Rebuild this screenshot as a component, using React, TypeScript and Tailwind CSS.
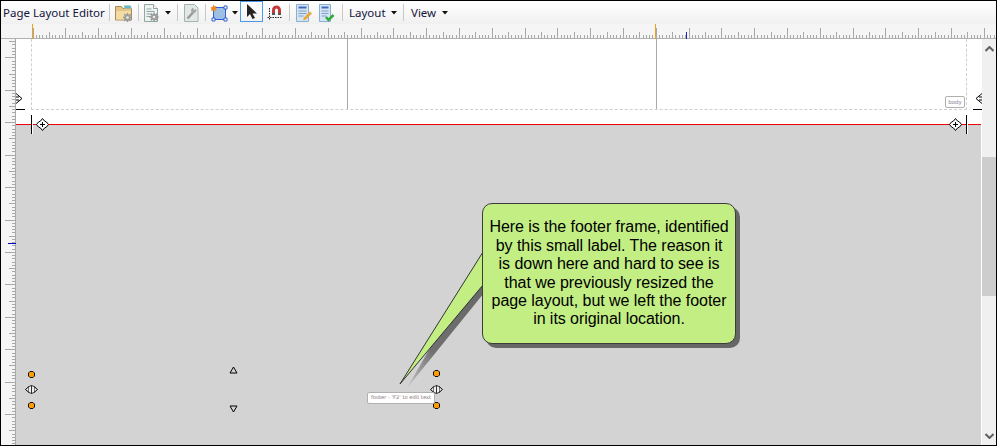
const Sep = ({ ml }: { ml: string }) => <div className={`w-px h-[17px] bg-[#c8c8c8] ${ml}`} />;

const Caret = ({ className = "" }: { className?: string }) => (
  <svg width="6" height="4" viewBox="0 0 6 4" className={className}>
    <path d="M0 0h6L3 3.500z" fill="#111" />
  </svg>
);

const Gear = ({ x, y }: { x: number; y: number }) => (
  <g transform={`translate(${x} ${y})`}>
    <path d="M0-4.500v9M-4.500 0h9M-3.200-3.200l6.400 6.400M3.200-3.200l-6.400 6.400" stroke="#8f8f8f" strokeWidth="1.500" />
    <circle r="3" fill="#9c9c9c" />
    <circle r="1.300" fill="#ececec" />
  </g>
);

const Ruler = () => {
  const ticks = [];
  for (let i = 0; i < 300; i++) {
    const x = 31.5 + i * 3.28;
    const h = i % 10 === 0 ? 11 : i % 5 === 0 ? 7 : 4;
    ticks.push(<path key={i} d={`M${Math.round(x) + 0.5} 15v-${h}`} stroke="#a8a8a8" />);
  }
  return (
    <svg width="995" height="15" className="block">
      {ticks}
      <path d="M0 14.500h995" stroke="#b0b0b0" />
      <path d="M31.500 0v15M654.500 0v15" stroke="#f0a020" />
      <path d="M685.500 8v7" stroke="#2020c0" />
    </svg>
  );
};

const SideRuler = () => {
  const ticks = [];
  for (let i = 0; i < 130; i++) {
    const y = -14.14 + i * 3.244;
    const h = i % 10 === 0 ? 11 : i % 5 === 0 ? 7 : 4;
    ticks.push(<path key={i} d={`M15 ${Math.round(y) + 0.5}h-${h}`} stroke="#a8a8a8" />);
  }
  return (
    <svg width="15" height="406" className="block">
      {ticks}
      <path d="M14.500 0v406" stroke="#a8a8a8" />
      <path d="M7 204.500h8" stroke="#0000c8" />
    </svg>
  );
};

const Dot = ({ className }: { className: string }) => (
  <svg width="7" height="7" viewBox="0 0 7 7" className={`absolute ${className}`}>
    <path d="M2 .5h3L6.500 2v3L5 6.500H2L.5 5V2z" fill="#ff9d00" stroke="#111" />
  </svg>
);

const SideHandle = ({ className }: { className: string }) => (
  <svg width="13" height="9" viewBox="0 0 13 9" className={`absolute ${className}`}>
    <path d="M.5 4.500L4 1.500v6zM12.500 4.500L9 1.500v6z" fill="#efefef" stroke="#000" />
    <path d="M4 .5h5v8H4z" fill="#efefef" />
    <path d="M6.500 .5v8M4 1.500l2.500-1 2.500 1M4 7.500l2.500 1 2.500-1" fill="none" stroke="#000" strokeWidth=".8" />
  </svg>
);

const Tri = ({ className, down }: { className: string; down?: boolean }) => (
  <svg width="9" height="8" viewBox="0 0 9 8" className={`absolute ${className}`}>
    <path d={down ? "M1 1h7L4.500 7z" : "M1 7h7L4.500 1z"} fill="none" stroke="#000" />
  </svg>
);

const Move = ({ className }: { className: string }) => (
  <svg width="13" height="13" viewBox="0 0 13 13" className={`absolute ${className}`}>
    <path d="M6.500 .5l2 2.500 2 1 2 2.500-2 2.500-2 1-2 2.500-2-2.500-2-1L.5 6.500l2-2.500 2-1z" fill="#fff" stroke="#000" />
    <path d="M6.500 4v5M4 6.500h5" stroke="#000" />
  </svg>
);

const Mark = ({ className }: { className: string }) => <div className={`absolute bg-black ${className}`} />;

export default function App() {
  return (
    <div className="w-[997px] h-[446px] flex flex-col border border-black bg-white overflow-hidden font-['Noto_Sans',sans-serif]">
      {/* Toolbar */}
      <div className="h-[23px] shrink-0 flex items-center bg-gradient-to-b from-[#ffffff] to-[#f0f0f0] text-[11.500px] text-[#14143c]">
        <span className="ml-[2px] w-[99px] whitespace-nowrap">Page Layout Editor</span>
        <Sep ml="ml-[7px]" />
        <svg width="18" height="18" viewBox="0 0 18 18" className="ml-[5px]">
          <path d="M.5 5V2.500h6l1.500 2h8.500v11.500H.5z" fill="#e4c585" stroke="#a88c55" />
          <path d="M9 1.500h6.500l1 3H9.500z" fill="#58b8d8" stroke="#d8c48e" strokeWidth=".5" />
          <path d="M1 7h15v8.500H1z" fill="#f2dca4" />
          <Gear x={12.500} y={13.500} />
        </svg>
        <Sep ml="ml-[5px]" />
        <svg width="17" height="18" viewBox="0 0 17 18" className="ml-[5px]">
          <path d="M.5.5h9l4 4v13H.5z" fill="#eef3f2" stroke="#8fa8a4" />
          <path d="M9.500.5v4h4" fill="#fff" stroke="#8fa8a4" />
          <path d="M2.500 5h5M2.500 7.500h8M2.500 10h5M2.500 12.500h4" stroke="#8fa8a4" />
          <Gear x={10} y={13} />
        </svg>
        <Caret className="ml-[4px]" />
        <Sep ml="ml-[6px]" />
        <svg width="15" height="18" viewBox="0 0 15 18" className="ml-[6px]">
          <path d="M.5.5h10l3.500 3.500v13.500H.5z" fill="#e2e8e7" stroke="#a4b4b2" />
          <path d="M3.500 14.500l5.500-6" stroke="#9a9a9a" strokeWidth="2.500" />
          <path d="M7 5.500l2-2 1 2.500 2-1 .5 2-2.500 2.500-2.500-1z" fill="#a6a6a6" />
        </svg>
        <Sep ml="ml-[6px]" />
        <svg width="18" height="18" viewBox="0 0 18 18" className="ml-[4px]">
          <rect x="3.500" y="3.500" width="12" height="12" fill="#9dbfe4" stroke="#2f5fd0" />
          <path d="M2 14h3v3H2zM14 14h3v3h-3zM14 2h3v3h-3z" fill="#fff" stroke="#2f5fd0" />
          <path d="M3.500.5l1 2 2-.5-1 2 1.500 1.500-2 .5-.5 2-1.500-1.500-2 .5.5-2L.5 3.500l2-.5z" fill="#f5861f" />
        </svg>
        <Caret className="ml-[4px]" />
        <div className="ml-[2px] w-[23px] h-[21px] self-start flex items-center justify-center border border-[#4a9ae8]">
          <svg width="11" height="15" viewBox="0 0 11 15">
            <path d="M1 0v13l3-3 2.500 5 2.500-1-2.500-4.500H11z" fill="#222" />
          </svg>
        </div>
        <svg width="15" height="16" viewBox="0 0 15 16" className="ml-[4px]">
          <path d="M5 9V5a4.500 4.500 0 0 1 9 0v4h-3V5a1.500 1.500 0 0 0-3 0v4z" fill="#c23a3a" />
          <path d="M5 8h3v2H5zM11 8h3v2h-3z" fill="#555" />
          <path d="M.5 12.500h14M2.500 3v12" stroke="#222" strokeDasharray="1.500 1" />
        </svg>
        <Sep ml="ml-[7px]" />
        <svg width="16" height="18" viewBox="0 0 16 18" className="ml-[6px]">
          <path d="M.5.5h12v17H.5z" fill="#d5e5f5" stroke="#8ab0d0" />
          <path d="M2.500 3.500h8" stroke="#3a6ac0" strokeWidth="2" />
          <path d="M2.500 7h8M2.500 9.500h8M2.500 12h5" stroke="#7f9fc0" />
          <path d="M7 16.500l1-3 6-6 2 2-6 6z" fill="#e8a83a" />
        </svg>
        <svg width="16" height="18" viewBox="0 0 16 18" className="ml-[7px]">
          <path d="M.5.5h11v17H.5z" fill="#d5e5f5" stroke="#8ab0d0" />
          <path d="M2.500 3.500h7" stroke="#3a6ac0" strokeWidth="2" />
          <path d="M2.500 7h7M2.500 9.500h7M2.500 12h5" stroke="#7f9fc0" />
          <path d="M7 13l2.500 3 5-5" fill="none" stroke="#2eaa3a" strokeWidth="2.500" />
        </svg>
        <Sep ml="ml-[7px]" />
        <span className="ml-[6px] w-[37px]">Layout</span>
        <Caret className="ml-[5px]" />
        <Sep ml="ml-[6px]" />
        <span className="ml-[7px] w-[26px]">View</span>
        <Caret className="ml-[5px]" />
      </div>

      {/* Top ruler */}
      <div className="h-[15px] shrink-0 bg-[#f5f5f5]">
        <Ruler />
      </div>

      <div className="flex-1 flex min-h-0">
        {/* Left ruler */}
        <div className="w-[15px] shrink-0 bg-[#f5f5f5]">
          <SideRuler />
        </div>

        {/* Canvas */}
        <div className="relative w-[966px] shrink-0 flex flex-col border-r border-white">
          <div className="h-[85px] bg-white shrink-0" />
          <div className="h-px bg-[#f00000] shrink-0" />
          <div className="flex-1 bg-[#d3d3d3]" />

          {/* page frame */}
          <div className="absolute left-[15px] top-0 w-[936px] h-[71px] border-x border-b border-dashed border-[#cfcfcf]" />
          <div className="absolute left-[331px] top-0 w-px h-[70px] bg-[#aaaaaa]" />
          <div className="absolute left-[640px] top-0 w-px h-[70px] bg-[#aaaaaa]" />

          <div className="absolute left-[929px] top-[57px] w-[20px] h-[12px] flex items-center justify-center rounded-[2px] border border-[#b0b0b0] bg-white text-[5.500px] text-[#8a8a9a] font-['DejaVu_Sans',sans-serif]">
            body
          </div>

          {/* guides and handles */}
          <Mark className="left-0 top-[70px] w-[9px] h-px" />
          <Mark className="left-[957px] top-[70px] w-[9px] h-px" />
          <Mark className="left-[15px] top-[76px] w-px h-[19px] shadow-[1px_0_0_#fff]" />
          <Mark className="left-[950px] top-[76px] w-px h-[19px] shadow-[1px_0_0_#fff]" />
          <Move className="left-[20px] top-[79px]" />
          <Move className="left-[933px] top-[79px]" />
          <svg width="7" height="11" viewBox="0 0 7 11" className="absolute left-0 top-[54px]">
            <path d="M0 .5l6 5-6 5" fill="#fff" stroke="#000" />
            <path d="M0 4h3M0 7h3" stroke="#000" />
          </svg>
          <svg width="7" height="11" viewBox="0 0 7 11" className="absolute left-[959px] top-[54px]">
            <path d="M7 .5l-6 5 6 5" fill="#fff" stroke="#000" />
            <path d="M7 4H4M7 7H4" stroke="#000" />
          </svg>

          <Dot className="left-[12px] top-[332px]" />
          <Dot className="left-[12px] top-[363px]" />
          <Dot className="left-[417px] top-[331px]" />
          <Dot className="left-[417px] top-[363px]" />
          <SideHandle className="left-[9px] top-[346px]" />
          <SideHandle className="left-[414px] top-[346px]" />
          <Tri className="left-[213px] top-[327px]" />
          <Tri className="left-[213px] top-[366px]" down />

          <div className="absolute left-[351px] top-[353px] w-[68px] h-[12px] flex items-center justify-center rounded-[2px] border border-[#b0b0b0] bg-white text-[5.200px] text-[#8a7a7a] whitespace-nowrap font-['DejaVu_Sans',sans-serif]">
            footer - 'F2' to edit text
          </div>

          {/* callout */}
          <svg width="90" height="140" viewBox="0 0 90 140" className="absolute left-[383px] top-[212px]">
            <defs>
              <linearGradient id="tailShadow" x1="1" y1="0" x2="0" y2="1">
                <stop offset="0" stopColor="#666" />
                <stop offset="0.7" stopColor="#707070" />
                <stop offset="1" stopColor="#c8c8c8" />
              </linearGradient>
            </defs>
            <path d="M8 137L85 3V42z" fill="url(#tailShadow)" />
            <path d="M1 133L84 1V34z" fill="#c3ee84" stroke="#333" />
          </svg>
          <div className="absolute left-[466px] top-[164px] w-[254px] h-[141px] flex items-center justify-center rounded-[10px] border border-[#3c3c3c] bg-[#c3ee84] shadow-[4px_4px_0_#666] text-center text-[16px] leading-[18.400px] tracking-[-0.05px] text-black font-['Liberation_Sans',sans-serif]">
            <p>
              Here is the footer frame, identified
              <br />
              by this small label. The reason it
              <br />
              is down here and hard to see is
              <br />
              that we previously resized the
              <br />
              page layout, but we left the footer
              <br />
              in its original location.
            </p>
          </div>
        </div>

        {/* Scrollbar */}
        <div className="w-[14px] shrink-0 flex flex-col bg-[#f0f0f0]">
          <div className="h-[118px] shrink-0 pt-[7px] flex justify-center">
            <svg width="9" height="6" viewBox="0 0 9 6">
              <path d="M.5 5L4.500 1l4 4" fill="none" stroke="#606060" strokeWidth="2" />
            </svg>
          </div>
          <div className="h-[139px] shrink-0 bg-[#cdcdcd]" />
          <div className="flex-1 flex items-end justify-center pb-[6px]">
            <svg width="9" height="6" viewBox="0 0 9 6">
              <path d="M.5 1l4 4 4-4" fill="none" stroke="#606060" strokeWidth="2" />
            </svg>
          </div>
        </div>
      </div>
    </div>
  );
}
